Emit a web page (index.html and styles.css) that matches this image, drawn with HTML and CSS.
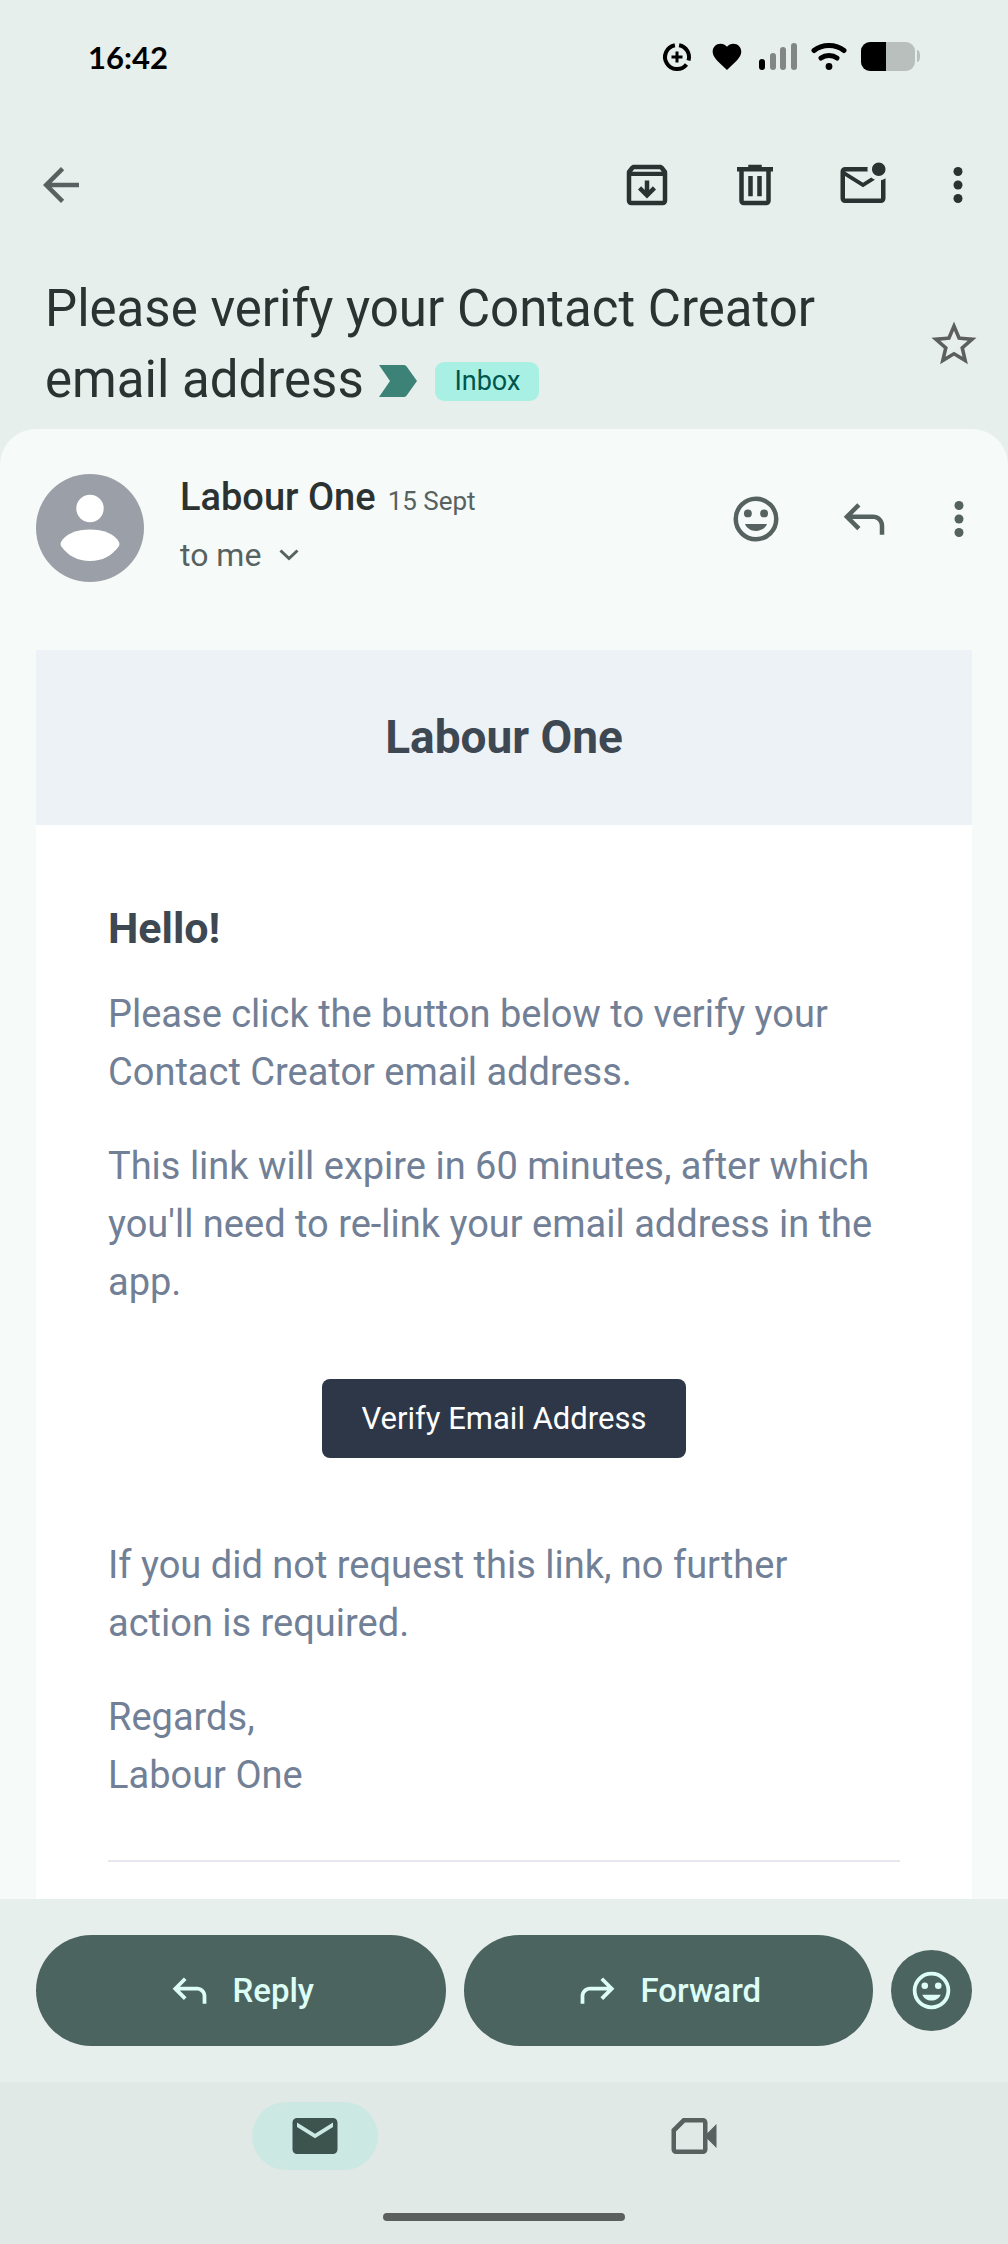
FILE: index.html
```
<!DOCTYPE html>
<html lang="en">
<head>
    <meta charset="UTF-8">
    <meta name="viewport" content="width=device-width, initial-scale=1.0">
    <title>Please verify your Contact Creator email address</title>
    <link rel="stylesheet" href="styles.css">
</head>
<body>

<!-- shared icons -->
<svg class="sprite" aria-hidden="true">
    <symbol id="more" viewBox="0 0 24 24">
        <circle cx="12" cy="6" r="2"/><circle cx="12" cy="12" r="2"/><circle cx="12" cy="18" r="2"/>
    </symbol>
    <symbol id="smile" viewBox="0 0 24 24">
        <circle cx="12" cy="12" r="9" fill="none" stroke="currentColor" stroke-width="2"/>
        <circle cx="8.4" cy="9.5" r="1.75"/><circle cx="15.6" cy="9.5" r="1.75"/>
        <path d="M7.1 14.2h9.8c-.8 1.9-2.7 3.1-4.9 3.1s-4.1-1.2-4.9-3.1z"/>
    </symbol>
    <symbol id="reply" viewBox="0 0 24 24">
        <path d="M19 19v-4c0-.83-.29-1.54-.88-2.13C17.54 12.29 16.83 12 16 12H6.83l3.6 3.6L9 17l-6-6 6-6 1.43 1.4L6.83 10H16c1.38 0 2.56.49 3.54 1.46C20.51 12.44 21 13.62 21 15v4h-2z"/>
    </symbol>
</svg>

<div class="status-bar">
    <span class="time">16:42</span>
    <div class="status-icons">
        <svg width="34" height="30" viewBox="0 0 34 30" fill="none" stroke="#000" stroke-width="4">
            <path d="M19.1 3.2A12 12 0 0 1 28.5 18.5M26.5 22.4A12 12 0 1 1 14.9 3.2"/>
            <path d="M17 9.5v11M11.5 15h11" stroke-width="3"/>
        </svg>
        <svg width="36" height="30" viewBox="0 0 36 30">
            <path transform="translate(1.8 -2.6) scale(1.43)" d="M12 21.35l-1.45-1.32C5.4 15.36 2 12.28 2 8.5 2 5.42 4.42 3 7.5 3c1.74 0 3.41.81 4.5 2.09C13.09 3.81 14.76 3 16.5 3 19.58 3 22 5.42 22 8.5c0 3.78-3.4 6.86-8.55 11.54L12 21.35z"/>
        </svg>
        <svg width="39" height="30" viewBox="0 0 39 30">
            <rect x="1" y="17" width="6" height="11" rx="3"/>
            <g fill="#828684">
                <rect x="12" y="11" width="6" height="17" rx="3"/>
                <rect x="22" y="5" width="6" height="23" rx="3"/>
                <rect x="33" y="1" width="6" height="27" rx="3"/>
            </g>
        </svg>
        <svg width="36" height="30" viewBox="0 0 36 30">
            <path d="M3 8.5C11 1.7 25 1.7 33 8.5M10 16C14.5 12.8 21.5 12.8 26 16" fill="none" stroke="#000" stroke-width="5" stroke-linecap="round"/>
            <circle cx="18" cy="24.5" r="3.4"/>
        </svg>
        <svg width="59" height="30" viewBox="0 0 59 30">
            <rect width="54" height="29" rx="9" fill="#b9bfbd"/>
            <path d="M25 0H9a9 9 0 0 0-9 9v11a9 9 0 0 0 9 9h16z"/>
            <path d="M56 8c2 0 3 2 3 6s-1 6-3 6z" fill="#b9bfbd"/>
        </svg>
    </div>
</div>

<header class="toolbar">
    <button class="icon-btn back" aria-label="Back">
        <svg viewBox="0 0 24 24"><path d="M20 11H7.83l5.59-5.59L12 4l-8 8 8 8 1.41-1.41L7.83 13H20v-2z"/></svg>
    </button>
    <button class="icon-btn" aria-label="Archive">
        <svg viewBox="0 0 24 24"><path fill-rule="evenodd" d="M6.2 3h11.6c.6 0 1.1.3 1.5.7l1.3 1.6c.3.3.4.8.4 1.2V19c0 1.1-.9 2-2 2H5c-1.1 0-2-.9-2-2V6.5c0-.4.1-.9.4-1.2l1.3-1.6c.4-.4.9-.7 1.5-.7zM6.3 5l-.9 1.1h13.2L17.7 5zM5 8v11h14V8zm6 2h2v4.2l1.6-1.6L16 14l-4 4-4-4 1.4-1.4 1.6 1.6z"/></svg>
    </button>
    <button class="icon-btn" aria-label="Delete">
        <svg viewBox="0 0 24 24"><path fill-rule="evenodd" d="M7 21c-1.1 0-2-.9-2-2V6H4V4h5V3h6v1h5v2h-1v13c0 1.1-.9 2-2 2H7zM17 6H7v13h10V6zM9 17h2V8H9v9zm4 0h2V8h-2v9z"/></svg>
    </button>
    <button class="icon-btn" aria-label="Mark as unread">
        <svg viewBox="0 0 24 24"><path d="M22 8.98V18c0 1.1-.9 2-2 2H4c-1.1 0-2-.9-2-2V6c0-1.1.9-2 2-2h10.1c-.06.32-.1.66-.1 1s.04.68.1 1H4l8 5 3.67-2.29c.47.43 1.02.76 1.63.98L12 13 4 8v10h16V9.9c.74-.15 1.42-.48 2-.92zM16 5c0 1.66 1.34 3 3 3s3-1.34 3-3-1.34-3-3-3-3 1.34-3 3z"/></svg>
    </button>
    <button class="icon-btn narrow" aria-label="More options">
        <svg><use href="#more"/></svg>
    </button>
</header>

<div class="subject">
    <h1>Please verify your Contact Creator email address
        <span class="labels">
            <svg width="38" height="32" viewBox="0 0 38 32"><path d="M0 0h25q2 0 3 2l10 14-10 14q-1 2-3 2H0l11-16z"/></svg>
            <span class="label">Inbox</span>
        </span>
    </h1>
    <button class="icon-btn narrow star" aria-label="Star">
        <svg viewBox="0 0 24 24"><path d="M22 9.24l-7.19-.62L12 2 9.19 8.63 2 9.24l5.46 4.73L5.82 21 12 17.27 18.18 21l-1.63-7.03L22 9.24zM12 15.4l-3.76 2.27 1-4.28-3.32-2.88 4.38-.38L12 6.1l1.71 4.04 4.38.38-3.32 2.88 1 4.28L12 15.4z"/></svg>
    </button>
</div>

<main class="message">
    <div class="sender">
        <svg class="avatar" viewBox="0 0 108 108">
            <circle cx="54" cy="54" r="54" fill="#9b9fa7"/>
            <circle cx="54" cy="34.5" r="13.7" fill="#fff"/>
            <path d="M25 68C29 60 41 55.5 54 55.5S79 60 83 68q1 2 0 4C76 82 66 87 54 87S32 82 25 72q-1-2 0-4z" fill="#fff"/>
        </svg>
        <div class="sender-info">
            <div class="from"><span class="name">Labour One</span><span class="date">15 Sept</span></div>
            <button class="to">to me
                <svg width="20" height="12" viewBox="0 0 20 12"><path d="M1.5 1.5l8.5 8 8.5-8" fill="none" stroke="currentColor" stroke-width="3"/></svg>
            </button>
        </div>
        <div class="sender-actions">
            <button class="icon-btn" aria-label="Add reaction"><svg><use href="#smile"/></svg></button>
            <button class="icon-btn" aria-label="Reply"><svg><use href="#reply"/></svg></button>
            <button class="icon-btn narrow" aria-label="More"><svg><use href="#more"/></svg></button>
        </div>
    </div>

    <article class="email">
        <div class="email-header">Labour One</div>
        <div class="email-body">
            <h2>Hello!</h2>
            <p>Please click the button below to verify your Contact Creator email address.</p>
            <p>This link will expire in 60 minutes, after which you'll need to re-link your email address in the app.</p>
            <a class="verify" href="#">Verify Email Address</a>
            <p>If you did not request this link, no further action is required.</p>
            <p>Regards,<br>Labour One</p>
            <hr>
        </div>
    </article>
</main>

<div class="reply-bar">
    <button class="pill"><svg><use href="#reply"/></svg>Reply</button>
    <button class="pill"><svg class="flip"><use href="#reply"/></svg>Forward</button>
    <button class="round" aria-label="Add reaction"><svg><use href="#smile"/></svg></button>
</div>

<footer class="bottom">
    <nav class="tabs">
        <a href="#" class="tab active" aria-label="Mail">
            <svg viewBox="0 0 24 24"><path d="M20 4H4c-1.1 0-2 .9-2 2v12c0 1.1.9 2 2 2h16c1.1 0 2-.9 2-2V6c0-1.1-.9-2-2-2zm0 4l-8 5-8-5V6l8 5 8-5v2z"/></svg>
        </a>
        <a href="#" class="tab" aria-label="Meet">
            <svg viewBox="0 0 24 24"><path fill-rule="evenodd" d="M7 4h9c1.1 0 2 .9 2 2v4.7l4-4v10.6l-4-4V18c0 1.1-.9 2-2 2H4c-1.1 0-2-.9-2-2V9zM8 6L4 10v8h12V6z"/></svg>
        </a>
    </nav>
    <div class="gesture"></div>
</footer>

</body>
</html>
```
FILE: styles.css
```
* {
    margin: 0;
    padding: 0;
    box-sizing: border-box;
}
body {
    background: #e7efec;
    color: #2a3331;
    font-family: Roboto, sans-serif;
    height: 100vh;
    display: flex;
    flex-direction: column;
    overflow: hidden;
}
button {
    border: none;
    background: none;
    color: inherit;
    font: inherit;
    cursor: pointer;
}
svg {
    display: block;
    flex-shrink: 0;
}
.sprite {
    display: none;
}

/* status bar */
.status-bar {
    height: 113px;
    padding: 0 88px;
    display: flex;
    align-items: center;
    justify-content: space-between;
    flex-shrink: 0;
}
.time {
    font-family: Lato, sans-serif;
    font-size: 31px;
    font-weight: bold;
    color: #000;
}
.status-icons {
    display: flex;
    gap: 14px;
}

/* toolbar */
.icon-btn {
    width: 108px;
    height: 108px;
    display: flex;
    align-items: center;
    justify-content: center;
    flex-shrink: 0;
}
.icon-btn svg {
    width: 54px;
    height: 54px;
    fill: currentColor;
}
.icon-btn.narrow {
    width: 82px;
}
.toolbar {
    height: 144px;
    padding: 0 9px 0 7px;
    display: flex;
    align-items: center;
    flex-shrink: 0;
}
.back {
    margin-right: auto;
    color: #58615f;
}

/* subject */
.subject {
    display: flex;
    align-items: center;
    padding: 16px 13px 14px 45px;
    flex-shrink: 0;
}
.subject h1 {
    flex: 1;
    font-size: 51px;
    line-height: 71px;
    font-weight: normal;
    padding-right: 30px;
}
.labels {
    display: inline-flex;
    align-items: center;
    gap: 18px;
    margin-left: 3px;
    fill: #3d8277;
}
.label {
    background: #a9f0e4;
    color: #00564e;
    font-size: 27px;
    line-height: 39px;
    padding: 0 19px;
    border-radius: 9px;
}
.star {
    color: #5d5f5e;
}

/* message card */
.message {
    flex: 1;
    min-height: 0;
    overflow: hidden;
    background: #f6faf9;
    border-radius: 36px 36px 0 0;
}
.sender {
    display: flex;
    padding: 36px 8px 0 36px;
    color: #56625f;
}
.avatar {
    width: 108px;
    height: 108px;
    margin-top: 9px;
}
.sender-info {
    flex: 1;
    margin-left: 36px;
    padding-top: 6px;
}
.from {
    display: flex;
    align-items: baseline;
    gap: 12px;
    line-height: 52px;
}
.name {
    font-size: 38px;
    font-weight: 500;
    color: #2a3331;
}
.date {
    font-size: 26px;
}
.to {
    display: flex;
    align-items: center;
    gap: 18px;
    font-size: 32px;
    line-height: 56px;
}
.sender-actions {
    display: flex;
}

/* email */
.email {
    margin: 67px 36px 0;
    background: #fff;
    color: #718096;
    font-size: 38px;
    line-height: 58px;
}
.email-header {
    background: #edf2f7;
    color: #3d4852;
    font-size: 46px;
    font-weight: bold;
    line-height: 63px;
    padding: 56px;
    text-align: center;
}
.email-body {
    padding: 72px;
}
.email h2 {
    color: #3d4852;
    font-size: 43px;
    line-height: 62px;
    margin-bottom: 26px;
}
.email p {
    margin-bottom: 36px;
}
.verify {
    display: block;
    width: fit-content;
    margin: 68px auto 78px;
    padding: 0 40px;
    background: #2d3748;
    border-radius: 8px;
    color: #fff;
    font-size: 31px;
    line-height: 79px;
    text-decoration: none;
}
.email hr {
    border: none;
    border-top: 2px solid #e8e5ef;
    margin-top: 56px;
}

/* reply buttons */
.reply-bar {
    display: flex;
    align-items: center;
    gap: 18px;
    padding: 36px;
    flex-shrink: 0;
}
.reply-bar svg {
    width: 45px;
    height: 45px;
    fill: currentColor;
}
.pill {
    flex: 1;
    height: 111px;
    display: flex;
    align-items: center;
    justify-content: center;
    gap: 20px;
    border-radius: 56px;
    background: #4c645f;
    color: #dcfef7;
    font-size: 33px;
    font-weight: 500;
}
.flip {
    transform: scaleX(-1);
}
.round {
    width: 81px;
    height: 81px;
    display: flex;
    align-items: center;
    justify-content: center;
    border-radius: 50%;
    background: #4c645f;
    color: #dcfef7;
}

/* bottom navigation */
.bottom {
    height: 162px;
    padding-top: 20px;
    background: #e1e9e6;
    flex-shrink: 0;
}
.tabs {
    display: flex;
    justify-content: space-around;
    padding: 0 125px;
}
.tab {
    width: 126px;
    height: 68px;
    display: flex;
    align-items: center;
    justify-content: center;
    border-radius: 34px;
    color: #58615f;
}
.tab.active {
    background: #cce8e2;
    color: #3c534e;
}
.tab svg {
    width: 54px;
    height: 54px;
    fill: currentColor;
}
.gesture {
    width: 242px;
    height: 8px;
    margin: 43px auto 0;
    border-radius: 4px;
    background: #5b605e;
}
```
